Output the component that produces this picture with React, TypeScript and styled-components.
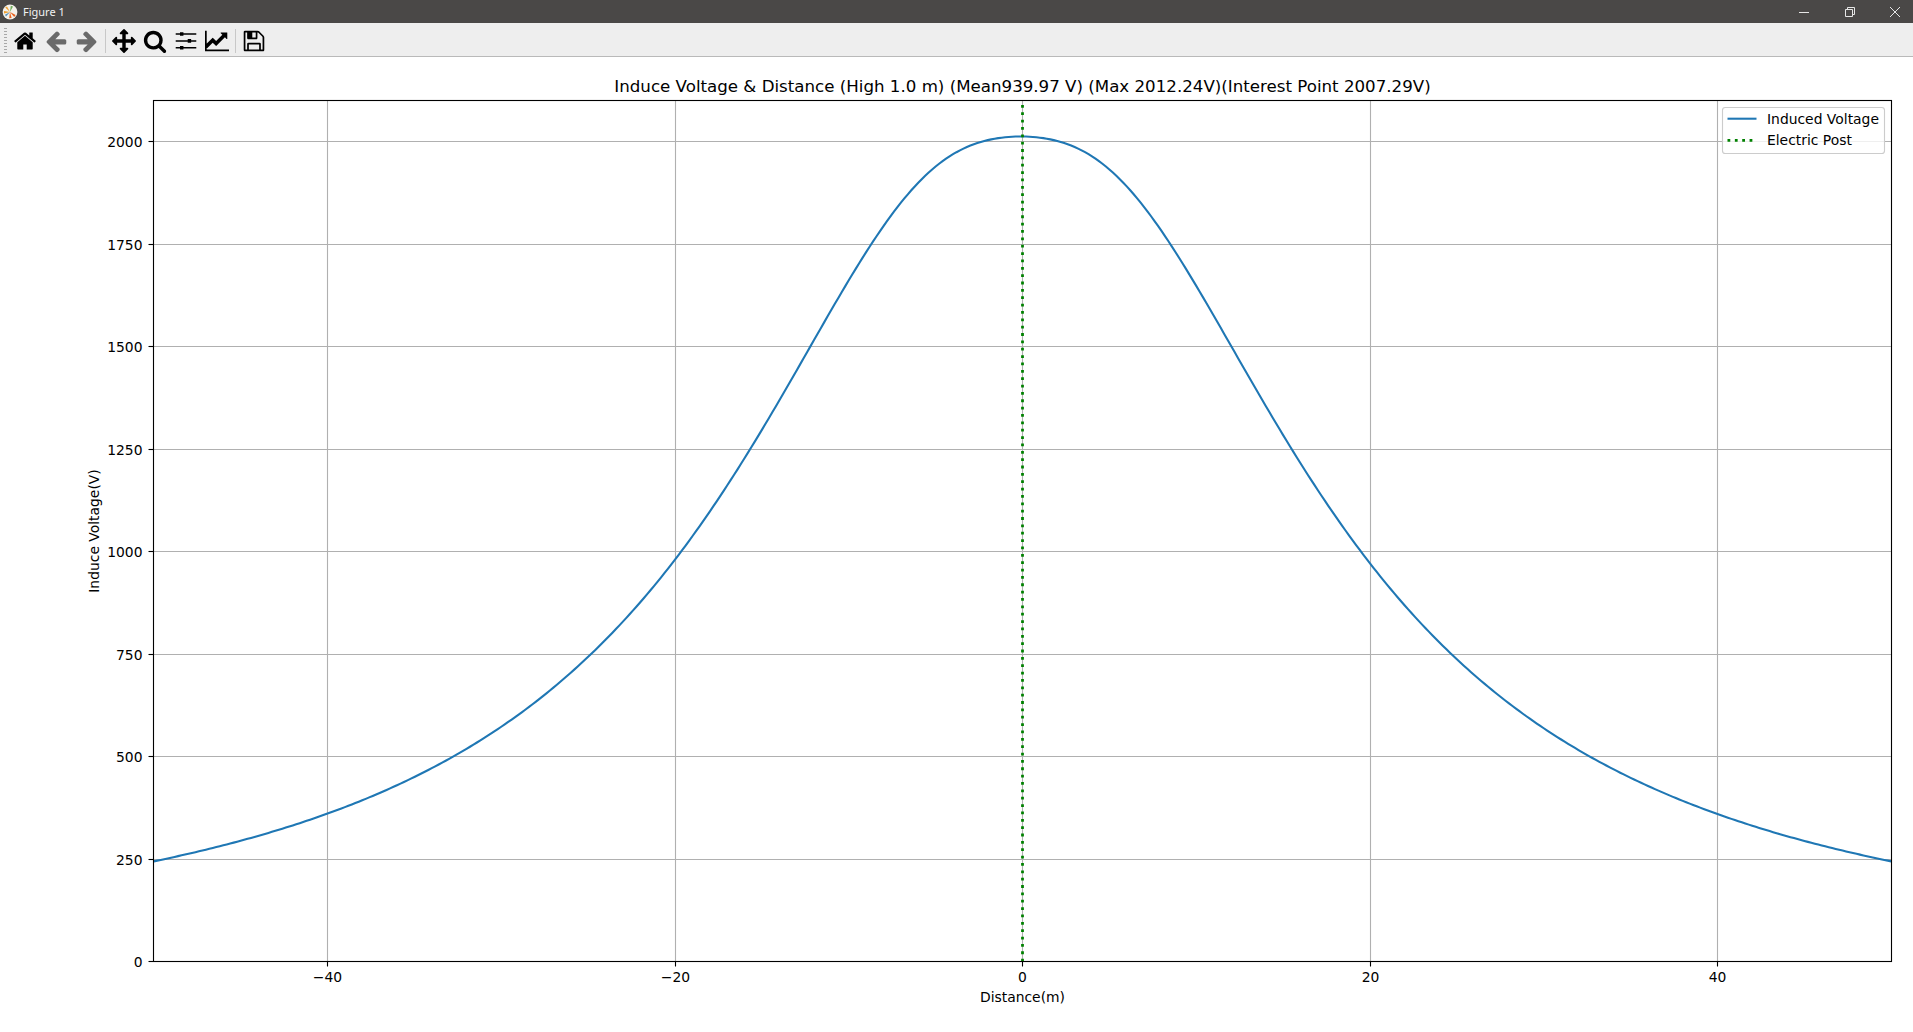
import React from "react";
import styled, { createGlobalStyle } from "styled-components";

const GlobalStyle = createGlobalStyle`
    html, body, #root {
        margin: 0;
        height: 100%;
        background: #ffffff;
    }
`;

// axes geometry, in page pixels
const LEFT = 153.5;
const RIGHT = 1891.5;
const TOP = 100.5;
const BOTTOM = 961.5;
const X_ZERO = 1022.5;
const X_SCALE = 17.375;
const Y_SCALE = 0.41;

const X_TICKS = [-40, -20, 0, 20, 40];
const Y_TICKS = [0, 250, 500, 750, 1000, 1250, 1500, 1750, 2000];

const ICONS = {
    home: "M1472 992v480q0 26-19 45t-45 19h-384v-384h-256v384h-384q-26 0-45-19t-19-45v-480q0-1 .5-3t.5-3l575-474 575 474q1 2 1 6zm223-69l-62 74q-8 9-21 11h-3q-13 0-21-7l-692-577-692 577q-12 8-24 7-13-2-21-11l-62-74q-8-10-7-23.5t11-21.5l719-599q32-26 76-26t76 26l244 204v-195q0-14 9-23t23-9h192q14 0 23 9t9 23v408l219 182q10 8 11 21.5t-7 23.5z",
    back: "M1664 896v128q0 53-32.5 90.5t-84.5 37.5h-704l293 294q38 36 38 90t-38 90l-75 76q-37 37-90 37-52 0-91-37l-651-652q-37-37-37-90 0-52 37-91l651-650q38-38 91-38 52 0 90 38l75 74q38 38 38 91t-38 91l-293 293h704q52 0 84.5 37.5t32.5 90.5z",
    forward: "M1600 960q0 54-37 91l-651 651q-39 37-91 37-51 0-90-37l-75-75q-38-38-38-91t38-91l293-293h-704q-52 0-84.5-37.5t-32.5-90.5v-128q0-53 32.5-90.5t84.5-37.5h704l-293-294q-38-36-38-90t38-90l75-75q38-38 90-38 53 0 91 38l651 651q37 35 37 90z",
    move: "M1792 896q0 26-19 45l-256 256q-19 19-45 19t-45-19-19-45v-128h-384v384h128q26 0 45 19t19 45-19 45l-256 256q-19 19-45 19t-45-19l-256-256q-19-19-19-45t19-45 45-19h128v-384h-384v128q0 26-19 45t-45 19-45-19l-256-256q-19-19-19-45t19-45l256-256q19-19 45-19t45 19 19 45v128h384v-384h-128q-26 0-45-19t-19-45 19-45l256-256q19-19 45-19t45 19l256 256q19 19 19 45t-19 45-45 19h-128v384h384v-128q0-26 19-45t45-19 45 19l256 256q19 19 19 45z",
    zoom: "M1216 832q0-185-131.5-316.5t-316.5-131.5-316.5 131.5-131.5 316.5 131.5 316.5 316.5 131.5 316.5-131.5 131.5-316.5zm512 832q0 52-38 90t-90 38q-54 0-90-38l-343-342q-179 124-399 124-143 0-273.5-55.5t-225-150-150-225-55.5-273.5 55.5-273.5 150-225 225-150 273.5-55.5 273.5 55.5 225 150 150 225 55.5 273.5q0 220-124 399l343 343q37 37 37 90z",
    sliders: "M128 320H448V240H704V320H1664V432H704V512H448V432H128ZM128 832H1024V752H1280V832H1664V944H1280V1024H1024V944H128ZM128 1344H448V1264H704V1344H1664V1456H704V1536H448V1456H128Z",
    chart: "M1792 1536v128h-1792v-1536h128v1408h1664zm-128-1248v435q0 21-19.5 29.5t-35.5-7.5l-121-121-633 633q-10 10-23 10t-23-10l-233-233-416 416-192-192 585-585q10-10 23-10t23 10l233 233 464-464-121-121q-16-16-7.5-35.5t29.5-19.5h435q14 0 23 9t9 23z",
    save: "M512 1536h768v-384h-768v384zm896 0h128v-896q0-14-10-38.5t-20-34.5l-281-281q-10-10-34-20t-39-10v416q0 40-28 68t-68 28h-576q-40 0-68-28t-28-68v-416h-128v1280h128v-416q0-40 28-68t68-28h832q40 0 68 28t28 68v416zm-384-928v-320q0-13-9.5-22.5t-22.5-9.5h-192q-13 0-22.5 9.5t-9.5 22.5v320q0 13 9.5 22.5t22.5 9.5h192q13 0 22.5-9.5t9.5-22.5zm640 32v928q0 40-28 68t-68 28h-1344q-40 0-68-28t-28-68v-1344q0-40 28-68t68-28h928q40 0 88 20t76 48l280 280q28 28 48 76t20 88z",
};

const snapX = (v: number) => Math.floor(X_ZERO + v * X_SCALE) + 0.5;
const snapY = (v: number) => Math.floor(BOTTOM - v * Y_SCALE) + 0.5;

const induced = (x: number) => {
    const d = x + 0.1 * (1 - (x / 50) ** 2);
    const q = 0.00295 - 0.0018 / (1 + (d * d) / 78);
    return 2012.24 / (1 + d * d * q);
};

const curvePath = () => {
    const points: string[] = [];
    for (let i = 0; i <= 500; i++) {
        const x = -50 + i * 0.2;
        const px = X_ZERO + x * X_SCALE;
        const py = BOTTOM - induced(x) * Y_SCALE;
        points.push(`${px.toFixed(2)},${py.toFixed(2)}`);
    }
    return "M" + points.join("L");
};

const formatTick = (v: number) => (v < 0 ? `\u2212${-v}` : `${v}`);

const Tool = ({ icon, disabled }: { icon: keyof typeof ICONS; disabled?: boolean }) => (
    <ToolButton $disabled={disabled}>
        <svg viewBox="0 0 1792 1792">
            <path d={ICONS[icon]} />
        </svg>
    </ToolButton>
);

const App = () => {
    return (
        <Window>
            <GlobalStyle />
            <TitleBar>
                <AppIcon viewBox="0 0 16 16">
                    <circle cx="8" cy="8" r="7.4" fill="#f4f1ea" />
                    <path d="M8 8 L3.2 3.6 L5 2.4 Z" fill="#f0a030" />
                    <path d="M8 8 L2 7 L2 9.6 Z" fill="#f0a030" />
                    <path d="M8 8 L11 2.6 L8.8 1.8 Z" fill="#6fae5a" />
                    <path d="M8 8 L13.6 11 L12.2 13 Z" fill="#e8601c" />
                    <path d="M8 8 L9.6 14 L7.2 14.2 Z" fill="#e8601c" />
                    <path d="M8 8 L4 12.4 L3 10.8 Z" fill="#4f8fc0" />
                </AppIcon>
                <WindowTitle>Figure 1</WindowTitle>
                <WindowControls>
                    <ControlIcon viewBox="0 0 10 10">
                        <path d="M0 5.5H10" />
                    </ControlIcon>
                    <ControlIcon viewBox="0 0 10 10">
                        <path d="M0.5 2.5H7.5V9.5H0.5Z" />
                        <path d="M2.5 2.5V0.5H9.5V7.5H7.5" />
                    </ControlIcon>
                    <ControlIcon viewBox="0 0 10 10">
                        <path d="M0 0L10 10M10 0L0 10" />
                    </ControlIcon>
                </WindowControls>
            </TitleBar>

            <Toolbar>
                <Handle />
                <Tool icon="home" />
                <Tool icon="back" disabled />
                <Tool icon="forward" disabled />
                <Separator />
                <Tool icon="move" />
                <Tool icon="zoom" />
                <Tool icon="sliders" />
                <Tool icon="chart" />
                <Separator />
                <Tool icon="save" />
            </Toolbar>

            <Figure>
                <Canvas viewBox="0 57 1913 975">
                    {X_TICKS.map((v) => (
                        <g key={v}>
                            <GridLine x1={snapX(v)} x2={snapX(v)} y1={TOP} y2={BOTTOM} />
                            <AxisLine x1={snapX(v)} x2={snapX(v)} y1={BOTTOM} y2={BOTTOM + 5} />
                            <TickLabel x={snapX(v)} y={982} textAnchor="middle">
                                {formatTick(v)}
                            </TickLabel>
                        </g>
                    ))}
                    {Y_TICKS.map((v) => (
                        <g key={v}>
                            {v > 0 && <GridLine x1={LEFT} x2={RIGHT} y1={snapY(v)} y2={snapY(v)} />}
                            <AxisLine x1={LEFT - 5} x2={LEFT} y1={snapY(v)} y2={snapY(v)} />
                            <TickLabel x={142.5} y={snapY(v) + 5} textAnchor="end">
                                {formatTick(v)}
                            </TickLabel>
                        </g>
                    ))}

                    <CurveLine d={curvePath()} />
                    <PostLine x1={X_ZERO} x2={X_ZERO} y1={BOTTOM} y2={TOP} />

                    <AxesFrame x={LEFT} y={TOP} width={RIGHT - LEFT} height={BOTTOM - TOP} />

                    <PlotTitle x={1022.5} y={91.5} textAnchor="middle">
                        Induce Voltage &amp; Distance (High 1.0 m) (Mean939.97 V) (Max 2012.24V)(Interest Point 2007.29V)
                    </PlotTitle>
                    <TickLabel x={1022.5} y={1002} textAnchor="middle">
                        Distance(m)
                    </TickLabel>
                    <TickLabel
                        x={0}
                        y={0}
                        textAnchor="middle"
                        transform="translate(98.5 531) rotate(-90)"
                    >
                        Induce Voltage(V)
                    </TickLabel>

                    <LegendBox x={1722.5} y={107.5} width={162} height={46} rx={2.8} />
                    <CurveLine d="M1727.5 118.7H1756.5" />
                    <PostLine x1={1727.5} x2={1756.5} y1={140.3} y2={140.3} />
                    <TickLabel x={1767} y={124}>Induced Voltage</TickLabel>
                    <TickLabel x={1767} y={144.5}>Electric Post</TickLabel>
                </Canvas>
            </Figure>
        </Window>
    );
};

export default App;

const Window = styled.div`
    display: flex;
    flex-direction: column;
    height: 100vh;
    overflow: hidden;
`;

const TitleBar = styled.div`
    display: flex;
    align-items: center;
    flex: 0 0 23px;
    padding-left: 2px;
    background: #4a4847;
`;

const AppIcon = styled.svg`
    width: 16px;
    height: 16px;
`;

const WindowTitle = styled.span`
    margin-left: 5px;
    color: #f2f2f2;
    font: 11px "Noto Sans", sans-serif;
`;

const WindowControls = styled.div`
    display: flex;
    gap: 35.5px;
    margin-left: auto;
    padding-right: 13px;
`;

const ControlIcon = styled.svg`
    width: 10px;
    height: 10px;
    fill: none;
    stroke: #e6e6e6;
    stroke-width: 1;
`;

const Toolbar = styled.div`
    display: flex;
    align-items: center;
    flex: 0 0 34px;
    box-sizing: border-box;
    padding: 2px 0 0 4px;
    background: #eeeeee;
    border-bottom: 1px solid #b9b9b9;
`;

const Handle = styled.div`
    width: 3px;
    height: 26px;
    margin-right: 2.5px;
    background: repeating-linear-gradient(to bottom, #a8a8a8 0 1px, transparent 1px 3px);
`;

const ToolButton = styled.div<{ $disabled?: boolean }>`
    display: flex;
    align-items: center;
    justify-content: center;
    width: 31px;
    height: 24px;
    fill: ${(p) => (p.$disabled ? "#6a6a6a" : "#000000")};

    svg {
        width: 24px;
        height: 24px;
    }
`;

const Separator = styled.div`
    width: 1px;
    height: 24px;
    margin: 0 2.5px;
    background: #c8c8c8;
`;

const Figure = styled.div`
    flex: 1;
    min-height: 0;
    background: #ffffff;
`;

const Canvas = styled.svg`
    display: block;
    width: 1913px;
    height: 975px;
`;

const GridLine = styled.line`
    stroke: #b0b0b0;
    stroke-width: 1.11;
`;

const AxisLine = styled.line`
    stroke: #000000;
    stroke-width: 1.11;
`;

const AxesFrame = styled.rect`
    fill: none;
    stroke: #000000;
    stroke-width: 1.11;
`;

const CurveLine = styled.path`
    fill: none;
    stroke: #1f77b4;
    stroke-width: 2.08;
    stroke-linejoin: round;
`;

const PostLine = styled.line`
    stroke: #008000;
    stroke-width: 2.78;
    stroke-dasharray: 2.78 4.58;
`;

const TickLabel = styled.text`
    fill: #000000;
    font: 13.89px "DejaVu Sans", sans-serif;
`;

const PlotTitle = styled.text`
    fill: #000000;
    font: 16.67px "DejaVu Sans", sans-serif;
`;

const LegendBox = styled.rect`
    fill: rgba(255, 255, 255, 0.8);
    stroke: #cccccc;
    stroke-width: 1.11;
`;
